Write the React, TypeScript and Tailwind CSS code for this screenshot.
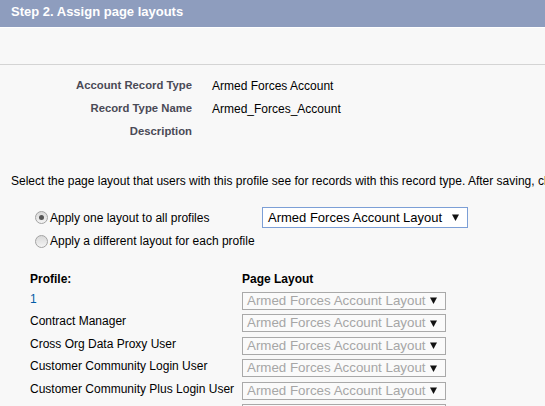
import React from "react";

const font = { fontFamily: '"Liberation Sans", Arial, sans-serif' };

function Arrow() {
  return (
    <svg width="7" height="7" viewBox="0 0 7 7" className="shrink-0">
      <polygon points="0,0.5 7,0.5 3.5,7" fill="#111" />
    </svg>
  );
}

function DisabledSelect() {
  return (
    <div className="flex h-[18px] w-[204px] items-center justify-between border border-[#a9a9a9] bg-[#fafafa] pl-[4px] pr-[8px] text-[13.33px] leading-none text-[#a6a6a6]">
      <span>Armed Forces Account Layout</span>
      <Arrow />
    </div>
  );
}

function Radio({ checked }: { checked?: boolean }) {
  return (
    <div className="flex h-[13px] w-[13px] shrink-0 items-center justify-center rounded-full border border-[#a3a3a3] bg-gradient-to-b from-[#d9d9d9] to-[#f4f4f4]">
      {checked && <div className="h-[5px] w-[5px] rounded-full bg-[#555]" />}
    </div>
  );
}

const details: [string, string][] = [
  ["Account Record Type", "Armed Forces Account"],
  ["Record Type Name", "Armed_Forces_Account"],
  ["Description", ""],
];

const profiles = [
  "1",
  "Contract Manager",
  "Cross Org Data Proxy User",
  "Customer Community Login User",
  "Customer Community Plus Login User",
  "",
];

export default function App() {
  return (
    <div className="h-[406px] w-[545px] overflow-hidden bg-[#f8f8f8]" style={font}>
      <div className="flex h-[27px] items-start bg-[#8e9dbe] pl-[11px] pt-[4px] text-[13px] font-bold leading-[16px] text-white">
        Step 2. Assign page layouts
      </div>
      <div className="h-[1px] bg-white" />
      <div className="h-[36px] bg-[#f8f8f8]" />
      <div className="h-[1px] bg-[#d4d4d4]" />

      <div className="pt-[9px]">
        {details.map(([label, value]) => (
          <div key={label} className="flex h-[23px] items-center">
            <div className="w-[192px] text-right text-[11.3px] font-bold text-[#4a4a56]">{label}</div>
            <div className="ml-[20px] text-[12px] text-black">{value}</div>
          </div>
        ))}
      </div>

      <div className="mt-[31px] whitespace-nowrap pl-[11px] text-[12px] leading-[14px] text-black">
        Select the page layout that users with this profile see for records with this record type. After saving, changes take effect immediately.
      </div>

      <div className="mt-[19px] flex h-[21px] items-center pl-[35px]">
        <div className="flex w-[227px] items-center">
          <Radio checked />
          <span className="ml-[2px] text-[12px] text-black">Apply one layout to all profiles</span>
        </div>
        <div className="flex h-[21px] w-[206px] items-center justify-between border border-[#7c9fd6] bg-white pl-[5px] pr-[8px] text-[13px] leading-none text-black">
          <span>Armed Forces Account Layout</span>
          <Arrow />
        </div>
      </div>
      <div className="mt-[5px] flex h-[16px] items-center pl-[35px]">
        <Radio />
        <span className="ml-[2px] text-[12px] text-black">Apply a different layout for each profile</span>
      </div>

      <div className="mt-[23px] flex h-[14px] items-center pl-[30px] text-[12px] font-bold leading-[14px] text-black">
        <div className="w-[212px]">Profile:</div>
        <div>Page Layout</div>
      </div>

      <div className="mt-[5.5px] pl-[30px]">
        {profiles.map((p, i) => (
          <div key={i} className="flex h-[22.5px] items-start">
            <div
              className={`w-[212px] whitespace-nowrap text-[12px] leading-[14px] ${
                p === "1" ? "text-[#015ba7]" : "text-black"
              }`}
            >
              {p}
            </div>
            <DisabledSelect />
          </div>
        ))}
      </div>
    </div>
  );
}
